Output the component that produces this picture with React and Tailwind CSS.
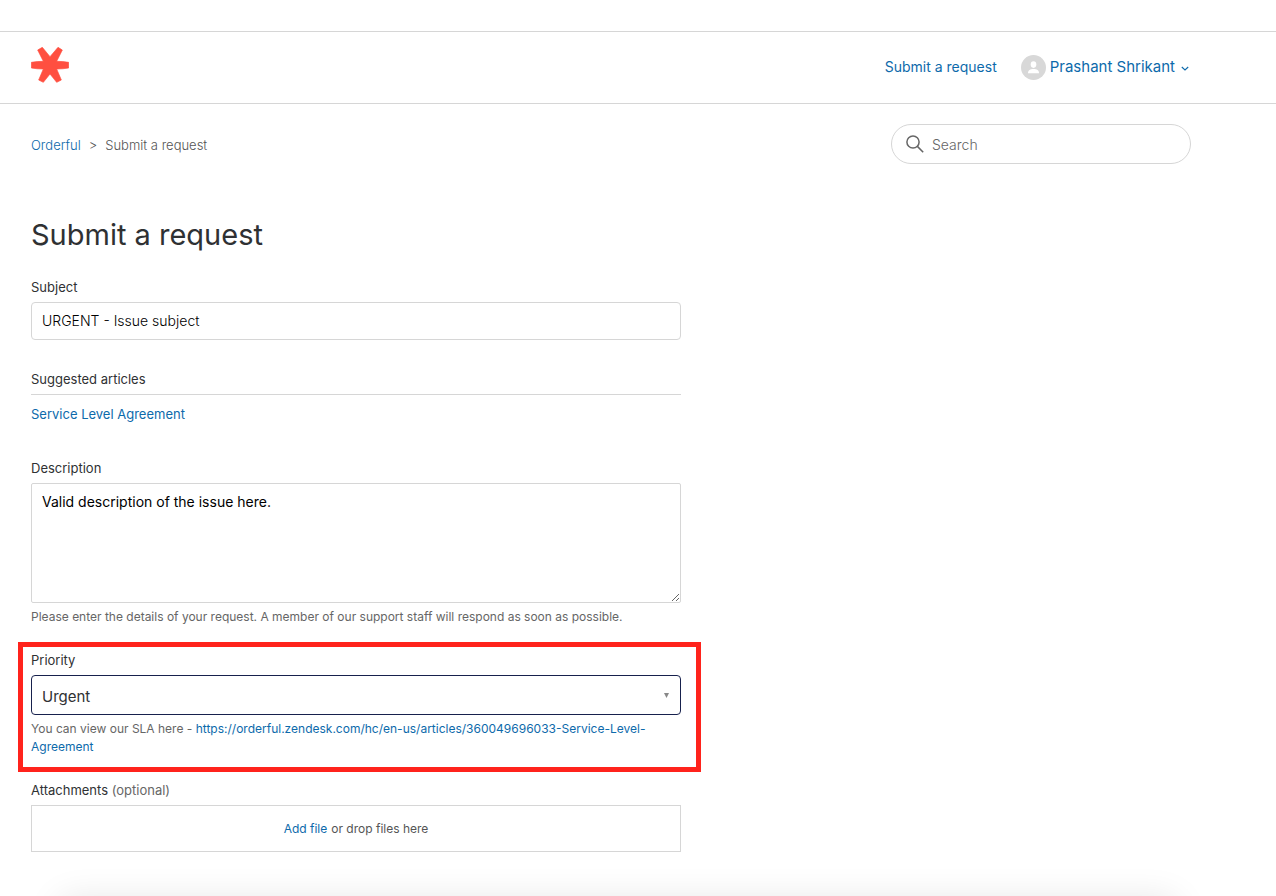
import { useState } from 'react'

const PRIORITIES = ['Low', 'Normal', 'High', 'Urgent']
const SLA_URL = 'https://orderful.zendesk.com/hc/en-us/articles/360049696033-Service-Level-Agreement'

function Logo() {
  return (
    <svg viewBox="0 0 114 108" className="h-9 w-[38px]" aria-hidden="true">
      <path
        d="M20 9 34 1 57 29 81 1 94 9 77 43Q96 43 113 46V63Q96 66 77 66L91 99 77 106 57 81 37 106 23 99 37 66Q18 66 1 63V46Q18 43 37 43Z"
        fill="#ff4f40"
        stroke="#ff4f40"
        strokeWidth="2"
        strokeLinejoin="round"
      />
    </svg>
  )
}

function Avatar() {
  return (
    <svg viewBox="0 0 25 25" className="size-[25px]" aria-hidden="true">
      <circle cx="12.5" cy="12.5" r="12.5" fill="#d8d8d8" />
      <ellipse cx="12.5" cy="9.6" rx="2.8" ry="3.3" fill="#fff" />
      <path d="M7 18.2c0-2.9 2.2-4.1 5.5-4.1s5.5 1.2 5.5 4.1z" fill="#fff" />
    </svg>
  )
}

function Header() {
  return (
    <header className="mt-[31px] border-y border-[#d6d6d6]">
      <div className="flex h-[71px] w-full max-w-[1222px] items-center justify-between px-[31px]">
        <a href="#" aria-label="Orderful" className="-mt-1.5">
          <Logo />
        </a>
        <nav className="flex items-center gap-6 text-[#0d6aab]">
          <a href="#" className="pb-0.5 text-sm">Submit a request</a>
          <button type="button" className="flex items-center gap-1 text-[15px]">
            <Avatar />
            Prashant Shrikant
            <svg viewBox="0 0 12 12" className="size-3" fill="none" stroke="currentColor" strokeWidth="1.1" aria-hidden="true">
              <path d="M2.8 5 6 8l3.2-3" />
            </svg>
          </button>
        </nav>
      </div>
    </header>
  )
}

export default function App() {
  const [subject, setSubject] = useState('URGENT - Issue subject')
  const [description, setDescription] = useState('Valid description of the issue here.')
  const [priority, setPriority] = useState('Urgent')

  const labelCls = 'block text-[13px] leading-[18px] text-[#2f3133]'
  const hintCls = 'text-xs leading-[18px] text-[#666]'

  return (
    <div className="relative min-h-screen overflow-hidden bg-white font-['Inter','Liberation_Sans',sans-serif] text-[#2f3133]">
      <Header />

      <main className="w-full max-w-[1222px] px-[31px] pt-5 pb-11">
        <div className="flex items-center justify-between">
          <ol className="flex gap-2 pt-1 text-[13px] font-light text-[#555]">
            <li><a href="#" className="text-[#0d6aab]">Orderful</a></li>
            <li aria-hidden="true">&gt;</li>
            <li>Submit a request</li>
          </ol>
          <label className="flex h-10 w-[300px] items-center gap-2 rounded-full border border-[#d6d6d6] px-3.5">
            <svg viewBox="0 0 18 18" className="size-[18px]" fill="none" stroke="#666" strokeWidth="1.5" aria-hidden="true">
              <circle cx="7" cy="7" r="6.1" />
              <path d="m11.4 11.4 5.8 5.8" />
            </svg>
            <input
              type="search"
              aria-label="Search"
              placeholder="Search"
              className="min-w-0 flex-1 pt-0.5 text-sm font-light outline-none placeholder:text-[#666]"
            />
          </label>
        </div>

        <h1 className="mt-[51px] text-[29px] leading-10">Submit a request</h1>

        <form className="mt-[23px] w-full max-w-[650px]">
          <label htmlFor="subject" className={labelCls}>Subject</label>
          <input
            id="subject"
            type="text"
            value={subject}
            onChange={(e) => setSubject(e.target.value)}
            className="mt-1.5 block h-[38px] w-full rounded border border-[#d6d6d6] px-2.5 pb-0.5 text-sm font-light text-black outline-none"
          />

          <h2 className="mt-[30px] border-b border-[#d6d6d6] pb-1.5 text-[13px] leading-[18px]">Suggested articles</h2>
          <a href="#" className="mt-2.5 block text-[13px] leading-[18px] text-[#0d6aab]">Service Level Agreement</a>

          <label htmlFor="description" className={`${labelCls} mt-9`}>Description</label>
          <textarea
            id="description"
            value={description}
            onChange={(e) => setDescription(e.target.value)}
            className="mt-1.5 block h-[120px] w-full resize-y rounded-xs border border-[#d6d6d6] px-2.5 py-2 text-sm text-black outline-none"
          />
          <p className={`${hintCls} mt-[5px]`}>
            Please enter the details of your request. A member of our support staff will respond as soon as possible.
          </p>

          <div className="mt-4 -mr-5 -ml-[13px] border-5 border-[#ff231c] pt-1 pr-[15px] pb-[11px] pl-2">
            <label htmlFor="priority" className={labelCls}>Priority</label>
            <div className="mt-1.5 grid items-center">
              <select
                id="priority"
                value={priority}
                onChange={(e) => setPriority(e.target.value)}
                className="col-start-1 row-start-1 h-10 w-full appearance-none rounded border border-[#17214d] px-2.5 pt-1 text-[15px] outline-none"
              >
                {PRIORITIES.map((p) => (
                  <option key={p} value={p}>{p}</option>
                ))}
              </select>
              <svg viewBox="0 0 5 5" className="pointer-events-none col-start-1 row-start-1 mr-3 size-[5px] justify-self-end" aria-hidden="true">
                <path d="M0 0h5L2.5 5z" fill="#888" />
              </svg>
            </div>
            <p className={`${hintCls} mt-[5px]`}>
              You can view our SLA here - <a href={SLA_URL} className="text-[#0d6aab]">{SLA_URL}</a>
            </p>
          </div>

          <label htmlFor="attachments" className={`${labelCls} mt-[9px]`}>
            Attachments <span className="text-[#666]">(optional)</span>
          </label>
          <div className="mt-1.5 flex h-[47px] items-center justify-center gap-1 border border-[#d6d6d6] text-xs text-[#555]">
            <label htmlFor="attachments" className="cursor-pointer text-[#0d6aab]">Add file</label>
            <span>or drop files here</span>
            <input id="attachments" type="file" multiple className="sr-only" />
          </div>
        </form>
      </main>

      <div className="absolute top-full right-[100px] left-[60px] h-10 rounded-lg shadow-[0_4px_36px_rgba(0,0,0,0.11)]" />
    </div>
  )
}
